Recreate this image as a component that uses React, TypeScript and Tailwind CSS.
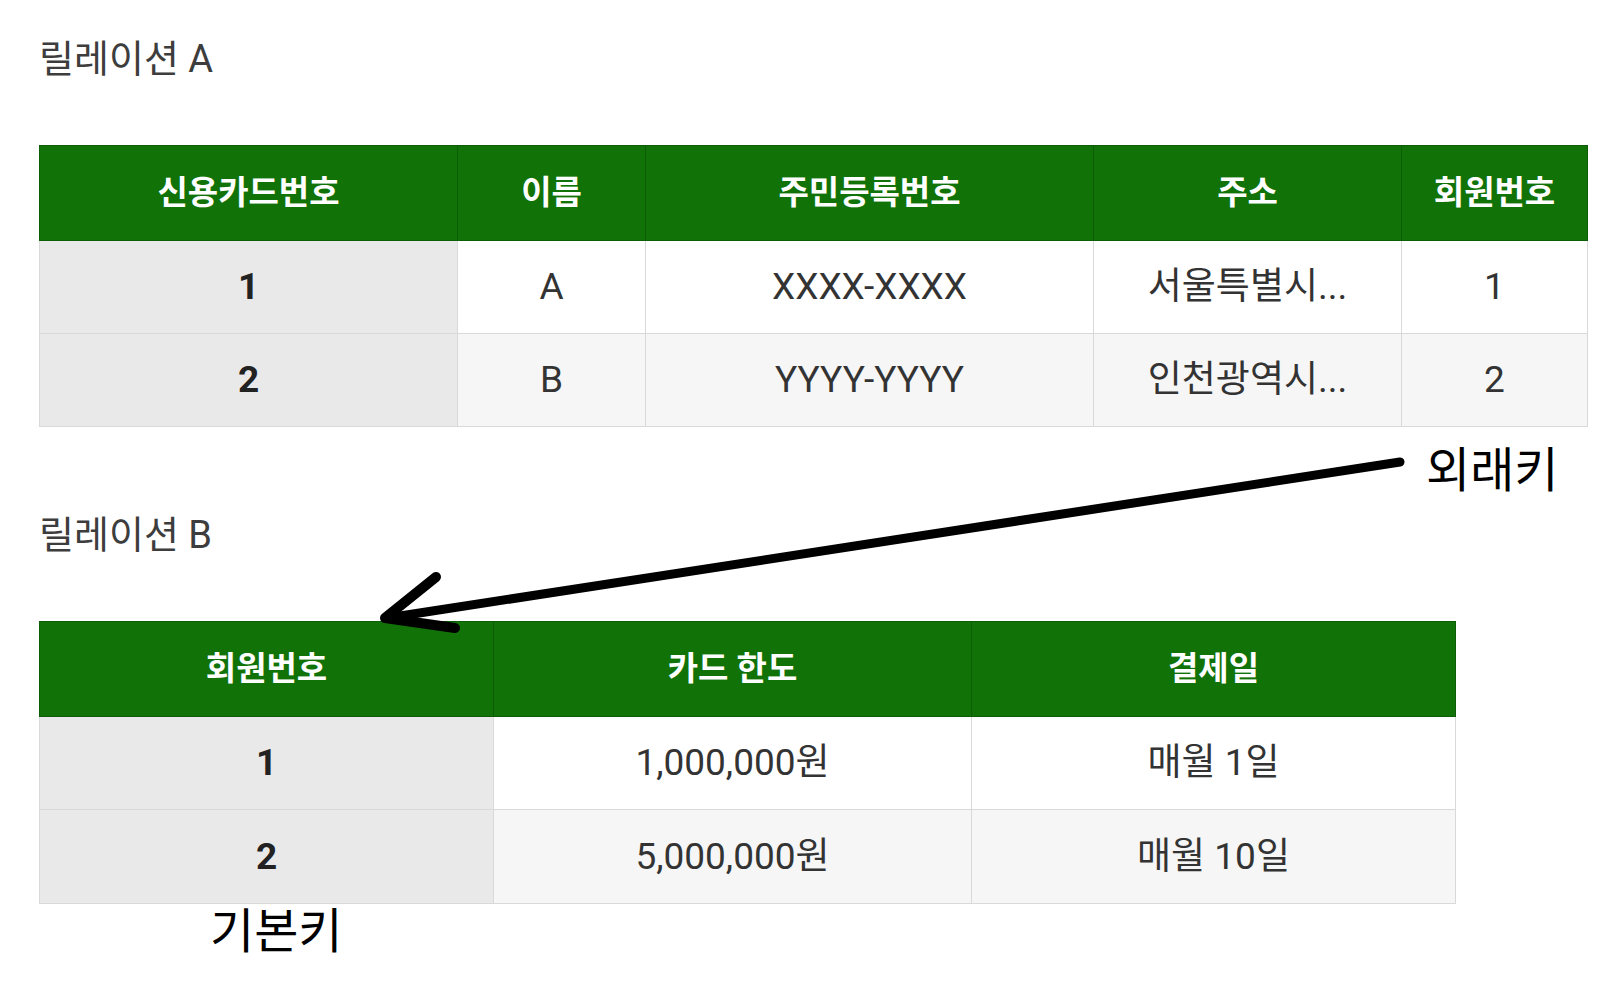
import React from 'react';

interface RelationTable {
  width: string;
  cols: string[];
  headers: string[];
  rows: string[][];
  rowHeights: string[];
}

const relationA: RelationTable = {
  width: 'w-[1548px]',
  cols: ['w-[418px]', 'w-[188px]', 'w-[448px]', 'w-[308px]', 'w-[186px]'],
  headers: ['신용카드번호', '이름', '주민등록번호', '주소', '회원번호'],
  rows: [
    ['1', 'A', 'XXXX-XXXX', '서울특별시...', '1'],
    ['2', 'B', 'YYYY-YYYY', '인천광역시...', '2'],
  ],
  rowHeights: ['h-[95px]', 'h-[93px]', 'h-[93px]'],
};

const relationB: RelationTable = {
  width: 'w-[1416px]',
  cols: ['w-[454px]', 'w-[478px]', 'w-[484px]'],
  headers: ['회원번호', '카드 한도', '결제일'],
  rows: [
    ['1', '1,000,000원', '매월 1일'],
    ['2', '5,000,000원', '매월 10일'],
  ],
  rowHeights: ['h-[95px]', 'h-[93px]', 'h-[94px]'],
};

const Relation: React.FC<{ table: RelationTable }> = ({ table }) => (
  <table className={`table-fixed border-collapse ${table.width}`}>
    <colgroup>
      {table.cols.map((w, i) => (
        <col key={i} className={w} />
      ))}
    </colgroup>
    <thead>
      <tr className={table.rowHeights[0]}>
        {table.headers.map((h) => (
          <th
            key={h}
            className="border border-[#0c5d05] bg-[#117207] p-0 text-center align-middle text-[33px] font-bold text-white"
          >
            {h}
          </th>
        ))}
      </tr>
    </thead>
    <tbody>
      {table.rows.map((row, r) => (
        <tr key={r} className={table.rowHeights[r + 1]}>
          {row.map((cell, c) => (
            <td
              key={c}
              className={`border border-[#d9d9d9] p-0 text-center align-middle text-[37px] ${
                c === 0
                  ? 'bg-[#e9e9e9] font-bold text-[#222]'
                  : r === 0
                    ? 'bg-white text-[#333]'
                    : 'bg-[#f6f6f6] text-[#333]'
              }`}
            >
              {cell}
            </td>
          ))}
        </tr>
      ))}
    </tbody>
  </table>
);

export default function App() {
  return (
    <div className="relative h-[1000px] w-[1623px] overflow-hidden bg-white pl-[39px] font-['Roboto','Noto_Sans_CJK_KR',sans-serif]">
      {/* 릴레이션 A */}
      <div className="mt-[37px] mb-[64px] h-[44px] text-[38px] leading-[44px] text-[#3d3d3d]">
        릴레이션 A
      </div>
      <Relation table={relationA} />

      {/* 릴레이션 B */}
      <div className="mt-[86px] mb-[64px] h-[44px] text-[38px] leading-[44px] text-[#3d3d3d]">
        릴레이션 B
      </div>
      <Relation table={relationB} />

      <div className="-mt-[3px] pl-[171px] font-['Noto_Sans_CJK_KR',sans-serif] text-[48px] leading-[52px] text-black">
        기본키
      </div>

      {/* annotations */}
      <div className="absolute left-[1426px] top-[440px] font-['Noto_Sans_CJK_KR',sans-serif] text-[48px] leading-[52px] text-black">
        외래키
      </div>
      <svg
        className="pointer-events-none absolute left-0 top-0"
        width="1623"
        height="1000"
        viewBox="0 0 1623 1000"
        fill="none"
      >
        <line x1="1400" y1="462" x2="387" y2="618" stroke="#000" strokeWidth="9" strokeLinecap="round" />
        <polyline
          points="436,577 385,618 455,628"
          stroke="#000"
          strokeWidth="10"
          strokeLinecap="round"
          strokeLinejoin="round"
        />
      </svg>
    </div>
  );
}
